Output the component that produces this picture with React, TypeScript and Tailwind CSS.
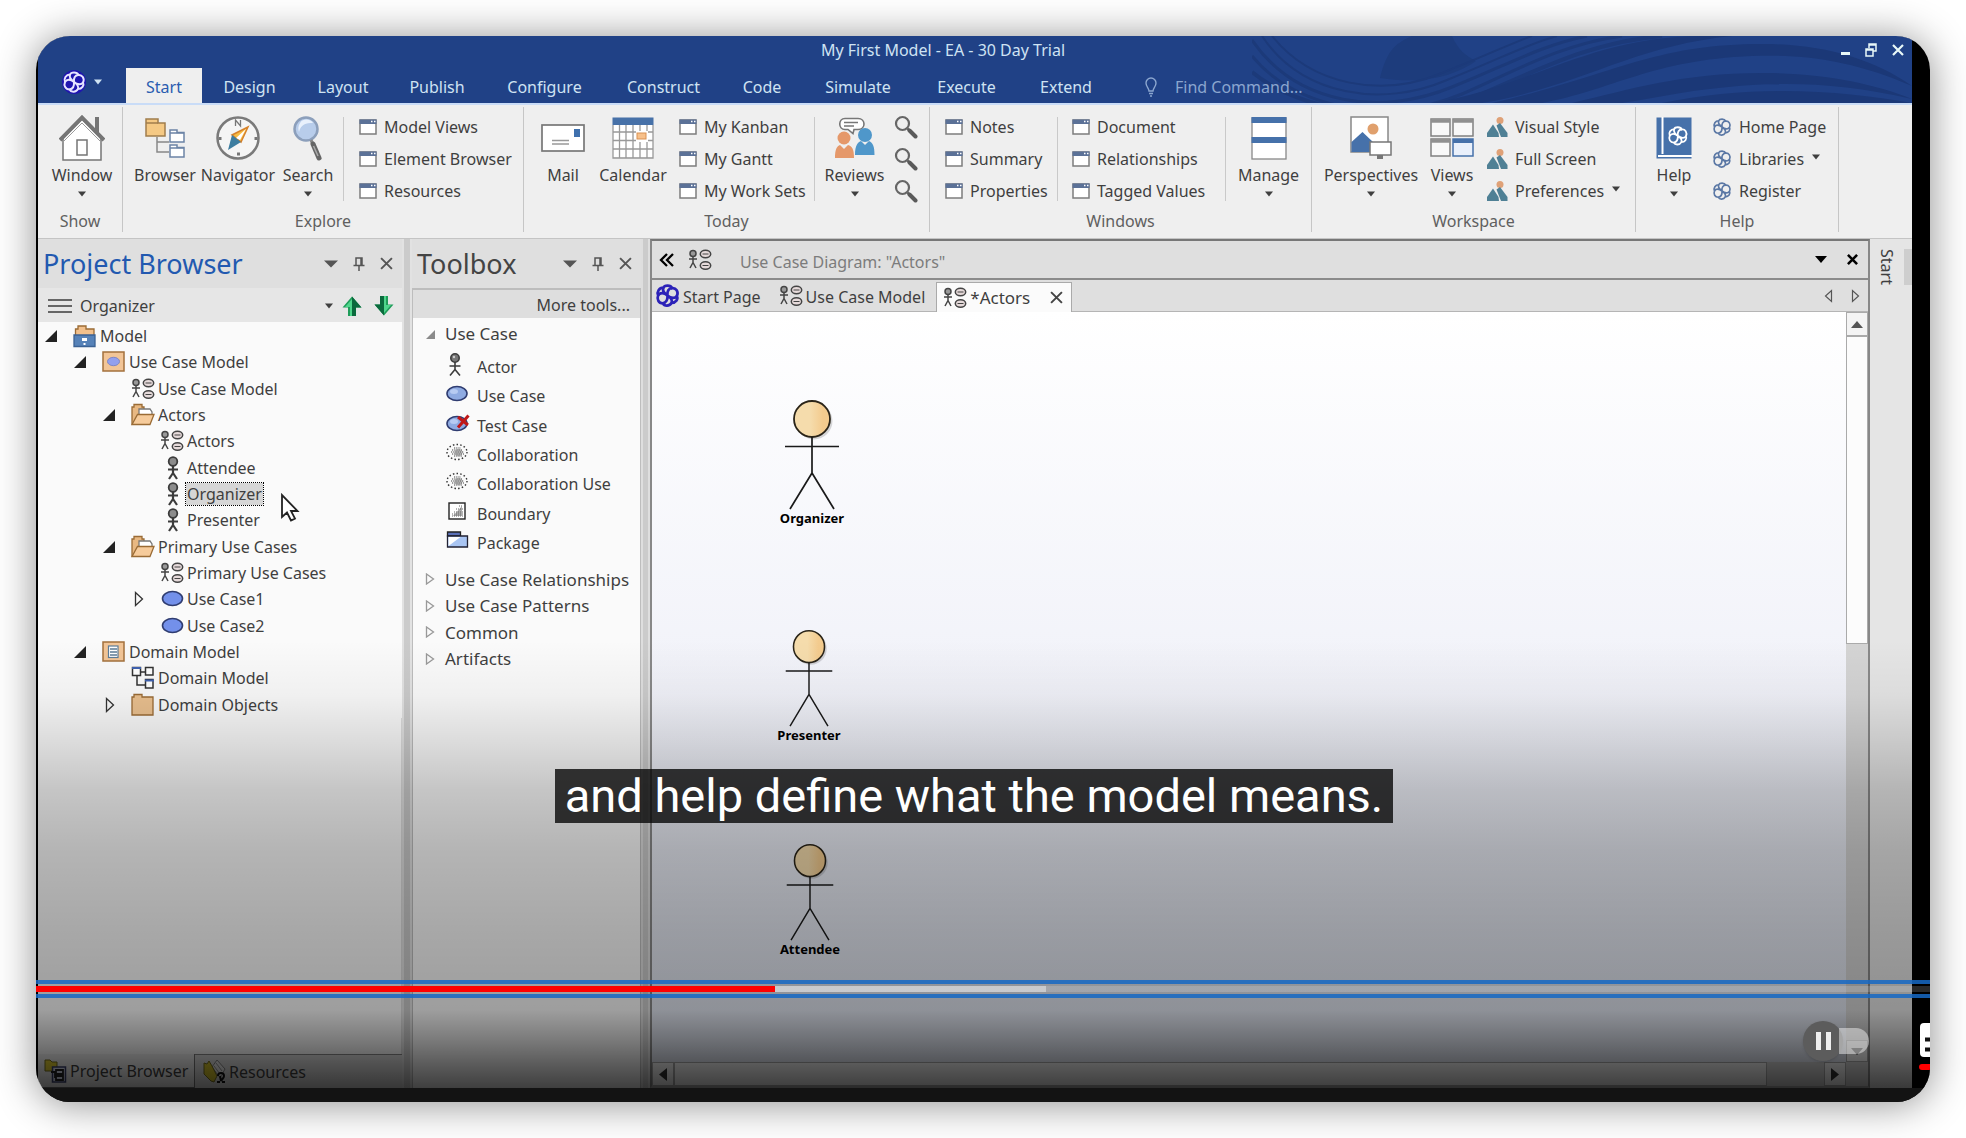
import React from "react";

type Kids = { children?: React.ReactNode };

/* ---------- small glyphs ---------- */

function Caret({ className = "" }: { className?: string }) {
  return (
    <svg className={className} width="10" height="6" viewBox="0 0 10 6" fill="currentColor" aria-hidden="true">
      <path d="M1 0.500h8L5 5.500z" />
    </svg>
  );
}

const knotPath =
  "M8 4.500C9 2 15 1.500 16.500 5c3.500-.5 6.500 3.500 4.500 7.500 1.500 3-1 6.500-5 6.500-2 3.500-7 3.500-8.500.5C3.500 19.500 1.500 15.500 3 12 1.500 8.500 4 4.500 8 4.500z";
const knotInner =
  "M8 4.500c-1 2.500 0 4.500 4 7.500 3.500 2.500 5 4.500 4 7M16.500 5c-3.500 0-5 3-4.500 7 .3 4-1.500 7-4.500 7.500M3 12c1.500-3 5.500-3 9 0s7.500 3 9 .5";

function Knot({ size = 20, color = "#5b78a5", width = 2 }: { size?: number; color?: string; width?: number }) {
  return (
    <svg width={size} height={size} viewBox="0 0 24 24" fill="none" stroke={color} strokeWidth={width} aria-hidden="true">
      <path d={knotPath} />
      <path d={knotInner} />
    </svg>
  );
}

function DiagramIcon() {
  return (
    <svg width="24" height="22" viewBox="0 0 24 22" fill="none" stroke="#444" strokeWidth="1.500" aria-hidden="true">
      <circle cx="5" cy="4.500" r="3" fill="#999" />
      <path d="M5 8v6M1 10h8M5 13.500L2 19M5 13.500L8 19" />
      <ellipse cx="17.500" cy="5" rx="5.200" ry="3.700" fill="#e6dada" />
      <path d="M14.500 5h6" strokeWidth="1" />
      <ellipse cx="17.500" cy="16.500" rx="5.200" ry="3.700" fill="#e6dada" />
      <path d="M14.500 16.500h6" strokeWidth="1" />
    </svg>
  );
}

function PersonIcon() {
  return (
    <svg width="24" height="24" viewBox="0 0 24 24" fill="none" stroke="#3c3c3c" aria-hidden="true">
      <path d="M13 10v8M8 13.500h10M13 17l-4 6M13 17l4 6" strokeWidth="2.200" />
      <circle cx="13" cy="5.500" r="4.300" fill="#8c8c8c" strokeWidth="1.800" />
    </svg>
  );
}

function ToolPersonIcon() {
  return (
    <svg width="24" height="24" viewBox="0 0 24 24" fill="none" stroke="#3c3c3c" strokeWidth="1.600" aria-hidden="true">
      <path d="M9 9v8M3.500 13h11M9 16.500L4 22.500M9 16.500l5 6" />
      <circle cx="9" cy="5" r="4.200" fill="#777" />
      <circle cx="8" cy="4" r="1.200" fill="#ccc" stroke="none" />
    </svg>
  );
}

function EllipseIcon({ tool = false, crossed = false }: { tool?: boolean; crossed?: boolean }) {
  return (
    <svg width="24" height="22" viewBox="0 0 24 22" aria-hidden="true">
      <ellipse cx={tool ? 11 : 12.5} cy="10.500" rx="10" ry="7" fill={tool ? "#8fabe2" : "#7390ea"} stroke="#2f3c70" strokeWidth="1.600" />
      {tool && <ellipse cx="8" cy="8.500" rx="4" ry="2.500" fill="#b7cbf2" />}
      {crossed && <path d="M12 14.500L22.500 2.500M12 4l10 8" stroke="#c01818" strokeWidth="3" />}
    </svg>
  );
}

function PackageIcon({ kind }: { kind: "usecase" | "domain" }) {
  return (
    <svg width="24" height="22" viewBox="0 0 24 22" aria-hidden="true">
      <rect x="1" y="1" width="21" height="19" fill="#f2c597" stroke="#a3703c" strokeWidth="1.500" />
      {kind === "usecase" ? (
        <ellipse cx="11.500" cy="10.500" rx="6" ry="4.200" fill="#93a0ee" stroke="#7f86c4" />
      ) : (
        <>
          <rect x="6.500" y="5" width="9.500" height="11.500" fill="#fff" stroke="#5d7c97" strokeWidth="1.200" />
          <path d="M8 8h7M8 11h7M8 14h7" stroke="#5d7c97" strokeWidth="1.300" />
        </>
      )}
    </svg>
  );
}

function FolderIcon({ open = false }: { open?: boolean }) {
  return (
    <svg width="24" height="24" viewBox="0 0 24 24" stroke="#9a6b35" strokeWidth="1.300" aria-hidden="true">
      {open ? (
        <>
          <path d="M1 21V4h2V1.500h8V4h2v17z" fill="#e8b882" />
          <path d="M8 12V6h11l2 3v4z" fill="#fff" stroke="#777" />
          <path d="M1 21.500l5.500-10H23l-4 10z" fill="#f6cb9b" />
        </>
      ) : (
        <path d="M1 22V4h2V1.500h8V4h11v18z" fill="#eac08f" />
      )}
    </svg>
  );
}

function ModelIcon() {
  return (
    <svg width="24" height="24" viewBox="0 0 24 24" aria-hidden="true">
      <path d="M2.500 12V5H5V2h8v3h8v7z" fill="#f2c08c" stroke="#9a6b35" strokeWidth="1.300" />
      <path d="M1 11h21v11.500H1z" fill="#5682b8" stroke="#3b6294" strokeWidth="1.300" />
      <path d="M9 14h5v3H9zM10.500 19h2v2h-2z" fill="#fff" />
    </svg>
  );
}

function DomainDiagramIcon() {
  return (
    <svg width="24" height="24" viewBox="0 0 24 24" fill="#fff" stroke="#333" strokeWidth="1.500" aria-hidden="true">
      <path d="M9 6h6M6 10v9h8" fill="none" />
      <rect x="1.500" y="1.500" width="8" height="8" />
      <rect x="14.500" y="1.500" width="7.500" height="7.500" />
      <rect x="14.500" y="13.500" width="7.500" height="8.500" />
      <path d="M1 2h9M14 14.500h9" stroke="#3f62b0" strokeWidth="2" />
    </svg>
  );
}

function CloudIcon() {
  return (
    <svg width="24" height="22" viewBox="0 0 24 22" fill="none" aria-hidden="true">
      <ellipse cx="11" cy="10" rx="10" ry="7.500" stroke="#333" strokeWidth="1.400" strokeDasharray="1.500 2.200" />
      <path d="M8 6h7M6 8h11M5 10h13M6 12h12M8 14h8" stroke="#444" strokeWidth="1.200" strokeDasharray="1.200 1" />
      <ellipse cx="12.500" cy="10.500" rx="4" ry="3.500" fill="#777" opacity="0.500" />
    </svg>
  );
}

function BoundaryIcon() {
  return (
    <svg width="24" height="22" viewBox="0 0 24 22" aria-hidden="true">
      <rect x="3" y="2" width="16" height="16" fill="#fff" stroke="#222" strokeWidth="1.400" />
      <path d="M7 15L16 5v10z" fill="#aaa" />
      <path d="M6 15h11M6 13h11M8 11h9M10 8h7M13 5h4" stroke="#666" strokeDasharray="1 1" />
    </svg>
  );
}

function ToolPackageIcon() {
  return (
    <svg width="24" height="22" viewBox="0 0 24 22" aria-hidden="true">
      <path d="M1.500 2h13v4h-13z" fill="#5a70b8" stroke="#222" strokeWidth="1.300" />
      <path d="M1.500 6h20v11h-20z" fill="#a9c5f3" stroke="#223" strokeWidth="1.300" />
      <path d="M2.500 7h12l-12 9z" fill="#fff" />
    </svg>
  );
}

function WindowIcon() {
  return (
    <svg width="18" height="16" viewBox="0 0 18 16" className="shrink-0" aria-hidden="true">
      <rect x="1" y="1" width="16" height="14" fill="#fff" stroke="#7d7d7d" strokeWidth="1.500" />
      <path d="M0.500 0.500h17v4.500H0.500z" fill="#5b7197" />
      <path d="M12 2.500h1.500M15 2.500h1.500" stroke="#fff" strokeWidth="1.500" />
    </svg>
  );
}

function StyleIcon() {
  return (
    <svg width="21" height="20" viewBox="0 0 21 20" className="shrink-0" aria-hidden="true">
      <circle cx="13" cy="3.500" r="3.500" fill="#dfa177" />
      <path d="M0 20V16l6-8.500L11.500 16 12 20z" fill="#4f8095" />
      <path d="M9.500 8.500L13 6l7.500 10v4H14z" fill="#4f8095" />
    </svg>
  );
}

function MagnifierSmall() {
  return (
    <svg width="24" height="24" viewBox="0 0 24 24" fill="none" aria-hidden="true">
      <circle cx="8.500" cy="8.500" r="6.500" stroke="#666" strokeWidth="2.200" />
      <path d="M13.500 13.500l2 2" stroke="#666" strokeWidth="2.500" />
      <path d="M15.500 15.500l6 6" stroke="#5a5a5a" strokeWidth="4" strokeLinecap="round" />
    </svg>
  );
}

function Pin() {
  return (
    <svg width="12" height="14" viewBox="0 0 12 14" fill="none" stroke="#555" strokeWidth="1.500" aria-hidden="true">
      <path d="M3 8V1h6v7M0.500 8.500h11M6 9v5M8 1v7" />
    </svg>
  );
}

function Cross({ size = 13, width = 1.8 }: { size?: number; width?: number }) {
  return (
    <svg width={size} height={size} viewBox="0 0 12 12" fill="none" stroke="currentColor" strokeWidth={width} aria-hidden="true">
      <path d="M1 1l10 10M11 1L1 11" />
    </svg>
  );
}

/* ---------- large ribbon icons ---------- */

const houseIcon = (
  <svg width="46" height="48" viewBox="0 0 46 48" aria-hidden="true">
    <path d="M36 3h4v18h-4z" fill="#757575" />
    <path d="M4 24L23 5l19 19v22H4z" fill="#fff" stroke="#757575" strokeWidth="1.500" />
    <path d="M1 26L23 3.500 45 26" fill="none" stroke="#757575" strokeWidth="4" />
    <path d="M3 29L23 9l20 20" fill="none" stroke="#999" strokeWidth="1" />
    <rect x="18" y="26" width="10" height="15" fill="#fff" stroke="#757575" strokeWidth="1.500" />
  </svg>
);

const browserIcon = (
  <svg width="40" height="42" viewBox="0 0 40 42" strokeWidth="1.500" aria-hidden="true">
    <path d="M12 20v15h12M12 25h12" fill="none" stroke="#888" />
    <path d="M1 19V2h12v4h7v13z" fill="#f5c984" stroke="#a07d4c" />
    <path d="M1 6h12" stroke="#a07d4c" />
    <path d="M25 25V13h7v2.500h7V25zM25 40V28h7v2.500h7V40z" fill="#fff" stroke="#6c84a6" />
    <path d="M25 16h14M25 31h14" stroke="#6c84a6" />
  </svg>
);

const navigatorIcon = (
  <svg width="46" height="46" viewBox="0 0 46 46" aria-hidden="true">
    <circle cx="23" cy="23" r="20.500" fill="#f5f5f5" stroke="#7a7a7a" strokeWidth="2.500" />
    <path d="M20.500 11V5l5 6V5" fill="none" stroke="#777" strokeWidth="1.300" />
    <path d="M5 22v3M41 22v3M22 39h3" stroke="#777" strokeWidth="3" />
    <path d="M33 12L17 20l9 7z" fill="#f7bd45" stroke="#d6822b" strokeWidth="1.500" />
    <path d="M31 14L21 23l4 2z" fill="#fff" />
    <path d="M17 20l9 7-13 8z" fill="#3d7da0" />
  </svg>
);

const searchIcon = (
  <svg width="30" height="46" viewBox="0 0 30 46" fill="none" aria-hidden="true">
    <circle cx="13" cy="14" r="11.500" fill="#b8cdeb" stroke="#8c9fbb" strokeWidth="2.500" />
    <path d="M6 17c2-8 7-9 14-9-2-4-10-5-13 0-2 3-2 6-1 9z" fill="#e9f1fc" />
    <path d="M18 25l3 6" stroke="#888" strokeWidth="3" />
    <path d="M20 29l6 14" stroke="#666" strokeWidth="5" strokeLinecap="round" />
    <path d="M20.500 31l4.500 10" stroke="#aaa" strokeWidth="1.500" />
  </svg>
);

const mailIcon = (
  <svg width="44" height="28" viewBox="0 0 44 28" aria-hidden="true">
    <rect x="1" y="1" width="42" height="26" fill="#fff" stroke="#777" strokeWidth="1.700" />
    <path d="M33 5h6v8h-6z" fill="#3f70ad" />
    <path d="M11 16.500h17M11 20h17" stroke="#999" strokeWidth="1.300" />
  </svg>
);

const calendarIcon = (
  <svg width="42" height="42" viewBox="0 0 42 42" aria-hidden="true">
    <rect x="1" y="1" width="40" height="39" fill="#fff" />
    <path d="M1 8v33h40V8M1 15h40M1 23.500h40M1 32h40M7.500 8v33M14 8v33M21 8v33M28 8v33M35 8v33" fill="none" stroke="#999" strokeWidth="1.300" />
    <path d="M0.500 0.500h41v7.500h-41z" fill="#4771a8" />
    <rect x="24" y="14" width="12" height="11" fill="#fff" />
    <rect x="25" y="16" width="9" height="6" fill="#f7c08a" stroke="#d99152" />
  </svg>
);

const reviewsIcon = (
  <svg width="40" height="42" viewBox="0 0 40 42" aria-hidden="true">
    <path d="M10 1.500h13c8 0 8 11 0 11h-4l-1 4-5-4h-3c-7 0-7-11 0-11z" fill="#fff" stroke="#777" strokeWidth="1.600" />
    <path d="M9 5.500h14M9 9h10" stroke="#777" strokeWidth="1.300" />
    <circle cx="30" cy="18" r="7" fill="#4f97ca" />
    <path d="M20 38c0-10 3-13 6-14l4 4 4-4c4 2 5.500 5 5.500 14z" fill="#4f97ca" />
    <circle cx="9" cy="21" r="6.500" fill="#e5986a" />
    <path d="M0 41c0-9 2-12 5-13l4 4 4-4c4 1 6 4 6 13z" fill="#e5986a" />
  </svg>
);

const manageIcon = (
  <svg width="36" height="44" viewBox="0 0 36 44" aria-hidden="true">
    <rect x="1" y="2" width="34" height="41" fill="#fff" stroke="#888" strokeWidth="1.300" />
    <path d="M0.500 1h35v6h-35zM0.500 21h35v6h-35z" fill="#4671aa" />
  </svg>
);

const perspectivesIcon = (
  <svg width="42" height="44" viewBox="0 0 42 44" aria-hidden="true">
    <rect x="1" y="1" width="37" height="35" fill="#fff" stroke="#888" strokeWidth="1.500" />
    <circle cx="23" cy="13" r="5.500" fill="#e0a06d" />
    <path d="M1.500 36V26l11-10L24 27v9z" fill="#4671aa" />
    <path d="M27 38h6v5h-6z" fill="#777" />
    <rect x="20" y="26" width="21" height="13" fill="#fff" stroke="#777" strokeWidth="1.500" />
  </svg>
);

const viewsIcon = (
  <svg width="44" height="40" viewBox="0 0 44 40" strokeWidth="1.500" aria-hidden="true">
    <path d="M1 1h19v17H1zM23 1h20v17H23zM1 21h19v17H1z" fill="#f8f8f8" stroke="#808080" />
    <path d="M23 21h20v17H23z" fill="#e9f0fb" stroke="#4671aa" />
    <path d="M1 3h19M23 3h20M1 23h19" stroke="#909090" strokeWidth="3.500" />
    <path d="M23 23h20" stroke="#4671aa" strokeWidth="4" />
  </svg>
);

const helpIcon = (
  <svg width="36" height="42" viewBox="0 0 36 42" aria-hidden="true">
    <path d="M0.500 0.500h35v41h-35z" fill="#4671aa" />
    <path d="M6.500 0v37M2 39h34" stroke="#fff" strokeWidth="2" />
    <g transform="translate(11 8) scale(0.900)" fill="none" stroke="#fff" strokeWidth="2">
      <path d={knotPath} />
      <path d={knotInner} />
    </g>
  </svg>
);

/* ---------- ribbon ---------- */

function Big({ icon, label, width, caret = false }: { icon: React.ReactNode; label: string; width: string; caret?: boolean }) {
  return (
    <button type="button" className={"flex shrink-0 flex-col items-center whitespace-nowrap " + width}>
      <span className="flex h-[54px] items-center">{icon}</span>
      <span className="leading-5">{label}</span>
      {caret && <Caret className="mt-1.5" />}
    </button>
  );
}

function List({ items, icon, carets = [] }: { items: string[]; icon: React.ReactNode; carets?: string[] }) {
  return (
    <div className="flex shrink-0 flex-col">
      {items.map((t) => (
        <button key={t} type="button" className="flex h-8 items-center gap-[7px] whitespace-nowrap">
          {icon}
          <span>{t}</span>
          {carets.includes(t) && <Caret className="mb-1" />}
        </button>
      ))}
    </div>
  );
}

function Group({ label, width, children }: Kids & { label: string; width: string }) {
  return (
    <section className={"flex shrink-0 flex-col border-r border-[#c6c6c6] " + width} aria-label={label}>
      <div className="flex h-[104px] items-start pt-1">{children}</div>
      <div className="text-center leading-5 text-[#606060]">{label}</div>
    </section>
  );
}

const Rule = ({ className = "" }: { className?: string }) => (
  <span className={"mt-1.5 h-[84px] w-px shrink-0 bg-[#c9c9c9] " + className} />
);

function Ribbon() {
  return (
    <div className="flex h-[136px] shrink-0 overflow-hidden border-t-2 border-b border-t-[#c9dcf7] border-b-[#c4c4c4] bg-[#efefef] pt-0.5 pb-1.5">
      <Group label="Show" width="w-[85px]">
        <Big icon={houseIcon} label="Window" width="w-[88px]" caret />
      </Group>
      <Group label="Explore" width="w-[401px]">
        <Big icon={browserIcon} label="Browser" width="ml-1 w-[76px]" />
        <Big icon={navigatorIcon} label="Navigator" width="w-[70px]" />
        <Big icon={searchIcon} label="Search" width="w-[70px]" caret />
        <Rule className="mr-[15px]" />
        <List items={["Model Views", "Element Browser", "Resources"]} icon={<WindowIcon />} />
      </Group>
      <Group label="Today" width="w-[406px]">
        <Big icon={mailIcon} label="Mail" width="ml-2 w-[62px]" />
        <Big icon={calendarIcon} label="Calendar" width="w-[78px]" />
        <div className="w-[142px] shrink-0 pl-[7px]">
          <List items={["My Kanban", "My Gantt", "My Work Sets"]} icon={<WindowIcon />} />
        </div>
        <Rule />
        <Big icon={reviewsIcon} label="Reviews" width="w-[79px]" caret />
        <div className="flex flex-col">
          {["Search reviews", "Search discussions", "Search journal"].map((t) => (
            <button key={t} type="button" aria-label={t} className="flex h-8 items-center">
              <MagnifierSmall />
            </button>
          ))}
        </div>
      </Group>
      <Group label="Windows" width="w-[382px]">
        <div className="w-[127px] shrink-0 pl-[15px]">
          <List items={["Notes", "Summary", "Properties"]} icon={<WindowIcon />} />
        </div>
        <Rule />
        <div className="w-[167px] shrink-0 pl-[14px]">
          <List items={["Document", "Relationships", "Tagged Values"]} icon={<WindowIcon />} />
        </div>
        <Rule />
        <Big icon={manageIcon} label="Manage" width="w-[85px]" caret />
      </Group>
      <Group label="Workspace" width="w-[324px]">
        <Big icon={perspectivesIcon} label="Perspectives" width="w-[118px]" caret />
        <Big icon={viewsIcon} label="Views" width="w-11" caret />
        <div className="pl-[13px]">
          <List items={["Visual Style", "Full Screen", "Preferences"]} icon={<StyleIcon />} carets={["Preferences"]} />
        </div>
      </Group>
      <Group label="Help" width="w-[203px]">
        <Big icon={helpIcon} label="Help" width="w-[76px]" caret />
        <List items={["Home Page", "Libraries", "Register"]} icon={<Knot />} carets={["Libraries"]} />
      </Group>
    </div>
  );
}

/* ---------- header ---------- */

const menuTabs: [string, string][] = [
  ["Start", "w-[76px] bg-[#efefef] text-[#2a5db0]"],
  ["Design", "w-[95px]"],
  ["Layout", "w-[92px]"],
  ["Publish", "w-24"],
  ["Configure", "w-[119px]"],
  ["Construct", "w-[119px]"],
  ["Code", "w-[78px]"],
  ["Simulate", "w-[114px]"],
  ["Execute", "w-[103px]"],
  ["Extend", "w-24"],
];

function Header() {
  return (
    <header className="relative flex h-[67px] shrink-0 flex-col bg-[#204186] text-[#cfe3f3]">
      <svg className="absolute top-0 right-0" width="660" height="67" viewBox="0 0 660 67" fill="none" aria-hidden="true">
        <path d="M128 42C135 15 142 8 160 0h40c6 14 14 20 24 25-20 14-50 24-96 17z" fill="#1d3c7c" />
        <g stroke="#1c3a7a" strokeWidth="2">
          <path d="M20 0c40 50 110 62 170 37 50-20 70-30 90-37" />
          <path d="M10 0c40 60 120 72 185 44 55-22 80-36 110-44" />
          <path d="M0 4c45 66 130 76 200 47 55-22 90-42 135-51" strokeWidth="3" />
          <path d="M0 20c45 56 140 68 210 38 55-24 100-50 160-58" strokeWidth="3" />
          <path d="M0 36c50 42 150 54 225 24C290 32 340 6 410 0" strokeWidth="4" />
        </g>
        <g fill="#1b3877">
          <path d="M180 67C280 50 340 0 450 0h30C380 10 330 50 230 67z" />
          <path d="M240 67C360 40 400 8 510 8c60 0 110 14 150 42-60-26-110-32-160-30-100 4-140 34-210 47z" />
          <path d="M320 67c60-14 110-30 190-30 60 0 110 10 150 26-60-14-110-17-160-14-60 4-90 12-130 18z" />
          <path d="M410 67c40-8 80-12 120-12 50 0 90 5 130 12z" />
        </g>
      </svg>
      <div className="relative flex h-8 items-start justify-center pr-16">
        <h1 className="text-base leading-7">My First Model - EA - 30 Day Trial</h1>
        <div className="absolute top-[7px] right-2 flex items-center gap-[15px] text-[#e8f8f8]">
          <button type="button" aria-label="Minimize" className="mt-1.5 h-[3px] w-[9px] bg-[#e8f8f8]" />
          <button type="button" aria-label="Restore">
            <svg width="12" height="14" viewBox="0 0 12 14" fill="none" stroke="currentColor" strokeWidth="1.500">
              <path d="M4 5V1h7v7H8M1 6h7v7H1zM4 2h7M1 7h7" />
            </svg>
          </button>
          <button type="button" aria-label="Close">
            <Cross size={12} width={2.2} />
          </button>
        </div>
      </div>
      <div className="relative flex h-[35px]">
        <button type="button" aria-label="Application menu" className="flex w-[88px] items-center gap-[7px] pl-6 pb-2">
          <span className="rounded-full bg-[#2015b0]">
            <Knot size={24} color="#e6e4ff" width={2} />
          </span>
          <Caret />
        </button>
        <nav className="flex">
          {menuTabs.map(([t, style]) => (
            <button key={t} type="button" className={"pt-0.5 text-center " + style}>
              {t}
            </button>
          ))}
        </nav>
        <label className="ml-[31px] flex items-center gap-[18px] pt-0.5 text-[#8ba6cf]">
          <svg width="12" height="20" viewBox="0 0 12 20" fill="none" stroke="currentColor" strokeWidth="1.400" aria-hidden="true">
            <path d="M4 14c0-3-3-4-3-8a5 5 0 0110 0c0 4-3 5-3 8zM4 16.500h4M5 19h2" />
          </svg>
          <input
            aria-label="Find Command"
            placeholder="Find Command..."
            className="w-40 bg-transparent outline-none placeholder:text-[#8ba6cf]"
          />
        </label>
      </div>
    </header>
  );
}

/* ---------- project browser ---------- */

type Row = { d: number; t: string; icon: React.ReactNode; s?: "open" | "closed"; sel?: boolean };

const indent = ["pl-[7px]", "pl-[36px]", "pl-[65px]", "pl-[94px]"];

const tree: Row[] = [
  { d: 0, t: "Model", icon: <ModelIcon />, s: "open" },
  { d: 1, t: "Use Case Model", icon: <PackageIcon kind="usecase" />, s: "open" },
  { d: 2, t: "Use Case Model", icon: <DiagramIcon /> },
  { d: 2, t: "Actors", icon: <FolderIcon open />, s: "open" },
  { d: 3, t: "Actors", icon: <DiagramIcon /> },
  { d: 3, t: "Attendee", icon: <PersonIcon /> },
  { d: 3, t: "Organizer", icon: <PersonIcon />, sel: true },
  { d: 3, t: "Presenter", icon: <PersonIcon /> },
  { d: 2, t: "Primary Use Cases", icon: <FolderIcon open />, s: "open" },
  { d: 3, t: "Primary Use Cases", icon: <DiagramIcon /> },
  { d: 3, t: "Use Case1", icon: <EllipseIcon />, s: "closed" },
  { d: 3, t: "Use Case2", icon: <EllipseIcon /> },
  { d: 1, t: "Domain Model", icon: <PackageIcon kind="domain" />, s: "open" },
  { d: 2, t: "Domain Model", icon: <DomainDiagramIcon /> },
  { d: 2, t: "Domain Objects", icon: <FolderIcon />, s: "closed" },
];

function PanelTitle({ title, color }: { title: string; color: string }) {
  return (
    <div className="flex h-[49px] shrink-0 items-center gap-[15px] bg-[#dfdfdf] pr-[9px] pl-[5px] text-[#555]">
      <h2 className={"flex-1 text-[27px] leading-9 " + color}>{title}</h2>
      <button type="button" aria-label={title + " options"}>
        <svg width="14" height="8" viewBox="0 0 14 8" fill="currentColor"><path d="M0 0.500h14L7 7.500z" /></svg>
      </button>
      <button type="button" aria-label={"Pin " + title}><Pin /></button>
      <button type="button" aria-label={"Close " + title}><Cross /></button>
    </div>
  );
}

function GreenArrow({ down = false }: { down?: boolean }) {
  return (
    <svg width="20" height="20" viewBox="0 0 20 20" className={down ? "rotate-180" : ""} aria-hidden="true">
      <path d="M10 0.500l9.500 11H14V20H6V11.500H0.500z" fill="#1f9d5a" />
      <path d="M10 0.500V20h4v-8.500h5.500z" fill="#0b6a3d" />
      <path d="M10 3v17H8v-9H3z" fill="#4fd68c" />
    </svg>
  );
}

function ProjectBrowser() {
  return (
    <aside className="relative flex w-[364px] shrink-0 flex-col bg-[#fafafa]">
      <PanelTitle title="Project Browser" color="text-[#2259b0]" />
      <div className="flex h-[34px] shrink-0 items-center bg-[#e6e6e6] pt-0.5 pl-2.5">
        <svg width="24" height="16" viewBox="0 0 24 16" stroke="#666" strokeWidth="2.200" aria-hidden="true">
          <path d="M0 2h24M0 8h24M0 14h24" />
        </svg>
        <span className="ml-2 flex-1">Organizer</span>
        <button type="button" aria-label="History"><Caret /></button>
        <button type="button" aria-label="Move up" className="ml-2"><GreenArrow /></button>
        <button type="button" aria-label="Move down" className="mr-2 ml-3"><GreenArrow down /></button>
      </div>
      <ul className="grid h-[396px] shrink-0 auto-rows-fr pt-px">
        {tree.map((r, i) => (
          <li key={i} className={"flex items-center " + indent[r.d]}>
            <span className="w-7 shrink-0">
              {r.s === "open" && (
                <svg width="12" height="12" viewBox="0 0 12 12"><path d="M12 0v12H0z" fill="#222" /></svg>
              )}
              {r.s === "closed" && (
                <svg width="12" height="16" viewBox="0 0 12 16" fill="none" stroke="#333" strokeWidth="1.300">
                  <path d="M3.500 1.500v13L10.500 8z" />
                </svg>
              )}
            </span>
            <span className="mr-0.5 w-6 shrink-0">{r.icon}</span>
            <span
              className={
                "px-px leading-[22px] " + (r.sel ? "bg-[#d6d6d6] outline-1 outline-dotted outline-black" : "")
              }
            >
              {r.t}
            </span>
          </li>
        ))}
      </ul>
      <div className="flex-1 border-r border-[#ddd]" />
      <div className="flex h-[34px] shrink-0 bg-[#dcdcdc]">
        <button type="button" className="flex w-[157px] items-center gap-0.5 whitespace-nowrap border-r border-b border-[#777] bg-[#f0f0f0] pl-1.5">
          <svg width="24" height="26" viewBox="0 0 24 26" aria-hidden="true">
            <path d="M1 2h5l2 2h5v9H1z" fill="#e2cf32" stroke="#777020" />
            <rect x="8.500" y="9" width="13" height="15" fill="#dfe3f5" stroke="#3c4270" strokeWidth="1.500" />
            <path d="M12 12h7v4h-7zM12 18h7v4h-7zM7 14h4v6" fill="none" stroke="#222" strokeWidth="1.800" />
          </svg>
          Project Browser
        </button>
        <button type="button" className="flex flex-1 items-center gap-0.5 border-t border-[#888] pl-2">
          <svg width="24" height="26" viewBox="0 0 24 26" aria-hidden="true">
            <path d="M9 8l5-7 8 9-5 9z" fill="#eee" stroke="#888" />
            <path d="M13 4l6 8M11 7l6 8" stroke="#999" />
            <path d="M1 4l3 1 2-3 3 5 5 10-3 6-3-1-7-7z" fill="#d8c62c" stroke="#777020" />
            <path d="M15 17c0-4 6-4 6 0 0 2-2 3-3 5M14 23h3M19 23h3M17 17l1 5" fill="none" stroke="#111" strokeWidth="2" />
          </svg>
          Resources
        </button>
      </div>
      <svg className="absolute top-[254px] left-[242px]" width="20" height="30" viewBox="0 0 20 30" aria-hidden="true">
        <path d="M2 2v22l5-4.500 4 8 4-2-4-7.500h6.500z" fill="#fff" stroke="#222" strokeWidth="1.800" />
      </svg>
    </aside>
  );
}

/* ---------- toolbox ---------- */

const tools: [string, React.ReactNode][] = [
  ["Actor", <ToolPersonIcon />],
  ["Use Case", <EllipseIcon tool />],
  ["Test Case", <EllipseIcon tool crossed />],
  ["Collaboration", <CloudIcon />],
  ["Collaboration Use", <CloudIcon />],
  ["Boundary", <BoundaryIcon />],
  ["Package", <ToolPackageIcon />],
];

function Toolbox() {
  return (
    <aside className="flex w-[229px] shrink-0 flex-col bg-[#dfdfdf]">
      <PanelTitle title="Toolbox" color="text-[#444]" />
      <div className="flex min-h-0 flex-1 flex-col overflow-hidden border-x border-t-2 border-[#bdbdbd] bg-[#fafafa]">
        <button type="button" className="h-7 shrink-0 bg-[#dedede] pt-0.5 pr-2.5 text-right">More tools...</button>
        <div className="flex h-8 shrink-0 items-center gap-[10px] pl-[13px] text-[17px]">
          <svg width="9" height="9" viewBox="0 0 9 9"><path d="M9 0v9H0z" fill="#8a8a8a" /></svg>
          Use Case
        </div>
        <ul className="grid h-[206px] shrink-0 auto-rows-fr pl-[33px]">
          {tools.map(([t, icon]) => (
            <li key={t} className="flex items-center gap-[7px]">
              {icon}
              <span className="pt-1">{t}</span>
            </li>
          ))}
        </ul>
        <ul className="mt-2.5 grid h-[106px] shrink-0 auto-rows-fr pl-3 text-[17px]">
          {["Use Case Relationships", "Use Case Patterns", "Common", "Artifacts"].map((t) => (
            <li key={t} className="flex items-center gap-[10px] whitespace-nowrap">
              <svg width="10" height="12" viewBox="0 0 10 12" className="shrink-0" fill="none" stroke="#999" strokeWidth="1.300">
                <path d="M1.500 1v10L8.500 6z" />
              </svg>
              {t}
            </li>
          ))}
        </ul>
      </div>
    </aside>
  );
}

/* ---------- diagram ---------- */

function Actor({ name, place, large = false }: { name: string; place: string; large?: boolean }) {
  return (
    <div className={"absolute flex w-20 flex-col items-center text-black " + place}>
      <svg width={large ? 58 : 50} height={large ? 112 : 99} viewBox="0 0 58 112" preserveAspectRatio="none" aria-hidden="true">
        <defs>
          <linearGradient id={"skin-" + name}>
            <stop offset="0.450" stopColor="#f5dcac" />
            <stop offset="0.800" stopColor="#f3cb8e" />
          </linearGradient>
        </defs>
        <circle cx="31" cy="22" r="18.500" fill="#000" opacity="0.150" />
        <circle cx="29" cy="20" r="18" fill={"url(#skin-" + name + ")"} stroke="#2a2418" strokeWidth="1.800" />
        <path d="M29 38v37M2 47.500h54M29 74L7 110M29 74l22 36" fill="none" stroke="#1a1a1a" strokeWidth="1.700" />
      </svg>
      <span className="-mt-0.5 text-[13px] leading-[18px] font-bold">{name}</span>
    </div>
  );
}

const scrollBtn = "flex shrink-0 items-center justify-center border border-[#aaa] bg-[#f4f4f4] text-[#444]";

function Diagram() {
  return (
    <main className="flex min-w-0 flex-1 flex-col border-2 border-t-[#777] border-r-[#888] border-b-[#aaa] border-l-[#888] bg-[#dfdfdf]">
      <div className="flex h-[39px] shrink-0 items-center border-b-2 border-[#8b8b8b] pl-1.5">
        <button type="button" aria-label="Collapse" className="text-black">
          <svg width="18" height="16" viewBox="0 0 18 16" fill="none" stroke="currentColor" strokeWidth="2.300">
            <path d="M9 2L3 8l6 6M15 2L9 8l6 6" />
          </svg>
        </button>
        <span className="ml-3"><DiagramIcon /></span>
        <span className="ml-7 flex-1 pt-1 text-[#7c7c7c]">Use Case Diagram: "Actors"</span>
        <button type="button" aria-label="Diagram options" className="mr-5 text-black">
          <svg width="12" height="7" viewBox="0 0 12 7" fill="currentColor"><path d="M0 0h12L6 7z" /></svg>
        </button>
        <button type="button" aria-label="Close diagram" className="mr-2.5 text-black"><Cross size={11} width={2.8} /></button>
      </div>
      <div className="flex h-8 shrink-0 items-stretch whitespace-nowrap">
        <button type="button" className="flex items-center gap-[3px] border-b border-[#b5b5b5] pr-4 pl-[3px]">
          <Knot size={25} color="#2c22b8" width={2.6} />
          <span className="pt-0.5">Start Page</span>
        </button>
        <button type="button" className="flex items-center border-b border-[#b5b5b5] pr-[11px] pl-0.5">
          <DiagramIcon /><span className="pt-0.5 pl-[3px]">Use Case Model</span>
        </button>
        <div className="mt-0.5 flex items-center border border-b-0 border-[#aaa] bg-[#fbfbfb] pr-2 pl-1.5">
          <DiagramIcon />
          <span className="pl-[3px] text-[17px]">*Actors</span>
          <button type="button" aria-label="Close tab" className="ml-5 text-[#444]"><Cross /></button>
        </div>
        <div className="flex flex-1 items-center justify-end gap-[18px] border-b border-[#b5b5b5] pr-2">
          {["Previous tab", "Next tab"].map((t, i) => (
            <button key={t} type="button" aria-label={t} className={i ? "" : "rotate-180"}>
              <svg width="9" height="14" viewBox="0 0 9 14" fill="none" stroke="#555" strokeWidth="1.200">
                <path d="M1.500 1.500v11L7.500 7z" />
              </svg>
            </button>
          ))}
        </div>
      </div>
      <div className="flex min-h-0 flex-1">
        <div className="relative flex-1 overflow-hidden bg-linear-to-b from-white via-[#f1f2f9] to-[#dfe4ef]">
          <Actor name="Organizer" place="top-[87px] left-[120px]" large />
          <Actor name="Presenter" place="top-[317px] left-[117px]" />
          <Actor name="Attendee" place="top-[531px] left-[118px]" />
        </div>
        <div className="flex w-[22px] shrink-0 flex-col bg-[#d4d4d4]">
          <button type="button" aria-label="Scroll up" className={scrollBtn + " h-6"}>
            <svg width="12" height="7" viewBox="0 0 12 7" fill="#555"><path d="M0 7h12L6 0z" /></svg>
          </button>
          <div className="h-[308px] border border-[#aaa] bg-[#fcfcfc]" />
          <div className="flex-1" />
          <button type="button" aria-label="Scroll down" className={scrollBtn + " h-[22px]"}>
            <svg width="12" height="7" viewBox="0 0 12 7" fill="#333"><path d="M0 0h12L6 7z" /></svg>
          </button>
        </div>
      </div>
      <div className="flex h-6 shrink-0 bg-[#d0d0d0]">
        <button type="button" aria-label="Scroll left" className={scrollBtn + " w-[22px]"}>
          <svg width="8" height="13" viewBox="0 0 8 13" fill="#333"><path d="M8 0v13L0 6.500z" /></svg>
        </button>
        <div className="flex flex-1"><div className="w-[95%] border border-[#aaa] bg-[#f4f4f4]" /></div>
        <button type="button" aria-label="Scroll right" className={scrollBtn + " mr-[22px] w-[22px]"}>
          <svg width="8" height="13" viewBox="0 0 8 13" fill="#333"><path d="M0 0v13L8 6.500z" /></svg>
        </button>
      </div>
    </main>
  );
}

/* ---------- player overlay ---------- */

function PlayerOverlay() {
  return (
    <>
      <div className="pointer-events-none absolute inset-x-0 bottom-3.5 h-[448px] bg-[linear-gradient(to_bottom,rgba(0,0,0,0)_0px,rgba(0,0,0,0.04)_55px,rgba(0,0,0,0.11)_95px,rgba(0,0,0,0.21)_150px,rgba(0,0,0,0.28)_210px,rgba(0,0,0,0.33)_290px,rgba(0,0,0,0.37)_370px,rgba(0,0,0,0.5)_398px,rgba(0,0,0,0.64)_425px,rgba(0,0,0,0.75)_448px)]" />
      <div className="absolute inset-x-0 bottom-[279px] flex justify-center pr-[18px]">
        <p className="bg-[#080808]/80 px-[10px] font-[Roboto,sans-serif] text-[47px] leading-[54px] whitespace-nowrap text-white">
          and help define what the model means.
        </p>
      </div>
      <div className="absolute inset-x-0 bottom-[104px] flex h-[18px] flex-col border-y-4 border-[#1668c4]/85 py-0.5">
        <input
          type="range"
          aria-label="Seek"
          defaultValue={39}
          className="h-1.5 w-full appearance-none bg-[linear-gradient(to_right,#ff0000_39%,rgba(255,255,255,0.5)_39%,rgba(255,255,255,0.5)_53.3%,rgba(255,255,255,0.16)_53.3%)] [&::-webkit-slider-thumb]:appearance-none"
        />
      </div>
      <button type="button" aria-label="Autoplay" className="absolute right-[61px] bottom-[41px] flex h-10 w-[66px] items-center">
        <span className="flex size-10 shrink-0 items-center justify-center gap-[5px] rounded-full bg-[#5c5c5c] shadow">
          <span className="h-[18px] w-[5px] bg-[#eee]" />
          <span className="h-[18px] w-[5px] bg-[#eee]" />
        </span>
        <span className="-ml-1 h-[26px] w-[30px] rounded-r-full bg-white/45" />
      </button>
      <button type="button" aria-label="Subtitles" className="absolute right-0 bottom-8 h-12 w-3">
        <svg width="12" height="48" viewBox="0 0 12 48" aria-hidden="true">
          <path d="M12 1H6a4 4 0 00-4 4v26a4 4 0 004 4h6z" fill="#fff" />
          <path d="M7 17.500h5M7 27.500h5" stroke="#111" strokeWidth="4" />
          <path d="M12 42H4a3 3 0 000 6h8z" fill="#f00" />
        </svg>
      </button>
    </>
  );
}

export default function App() {
  return (
    <div className="flex h-screen bg-white p-9 font-['Noto_Sans',sans-serif] text-base text-[#3f3f3f]">
      <div className="relative flex min-w-0 flex-1 flex-col overflow-hidden rounded-[34px] bg-black shadow-[0_2px_40px_rgba(0,0,0,0.45)]">
        <div className="mr-[18px] ml-0.5 flex min-h-0 flex-1 flex-col bg-[#d6d6d6]">
          <Header />
          <Ribbon />
          <div className="flex min-h-0 flex-1">
            <ProjectBrowser />
            <div className="w-2.5 shrink-0 border-x-2 border-[#e2e2e2] bg-[#cbcbcb]" />
            <Toolbox />
            <div className="w-[9px] shrink-0 border-x-2 border-[#dedede] bg-[#cbcbcb]" />
            <Diagram />
            <div className="flex w-[42px] shrink-0 justify-between bg-[#e5e5e5] pt-2.5">
              <button type="button" className="ml-[5px] h-9 leading-6 [writing-mode:vertical-rl]">Start</button>
              <span className="h-9 w-2 bg-[#cecece]" />
            </div>
          </div>
        </div>
        <div className="h-3.5 shrink-0 bg-[#131313]" />
        <PlayerOverlay />
      </div>
    </div>
  );
}
